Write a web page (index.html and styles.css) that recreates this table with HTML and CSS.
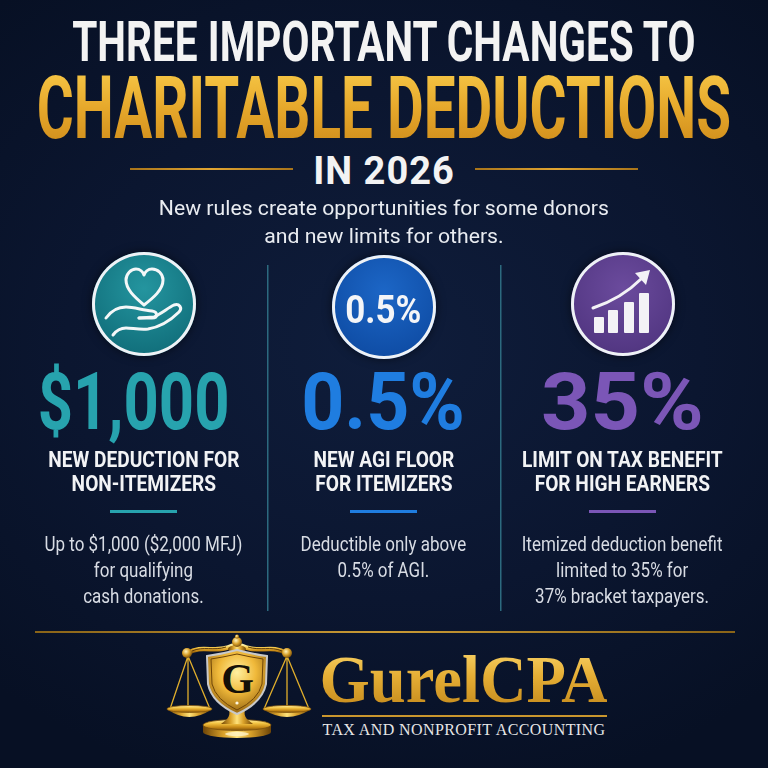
FILE: index.html
```html
<!DOCTYPE html>
<html lang="en">
<head>
<meta charset="utf-8">
<title>Three Important Changes to Charitable Deductions in 2026</title>
<link rel="stylesheet" href="styles.css">
</head>
<body>
<div class="page">
  <header class="hero">
    <h1 class="t1"><span class="sx sx-t1">THREE IMPORTANT CHANGES TO</span></h1>
    <h2 class="t2"><span class="sx sx-t2">CHARITABLE DEDUCTIONS</span></h2>
    <div class="year-row"><span class="rule"></span><span class="year">IN 2026</span><span class="rule"></span></div>
    <p class="sub"><span class="sx sx-sub">New rules create opportunities for some donors<br>and new limits for others.</span></p>
  </header>

  <section class="cols">
    <article class="col">
      <div class="icon icon-teal">
        <svg width="104" height="104" viewBox="0 0 104 104" fill="none" stroke="#f4f7f8" stroke-width="3" stroke-linecap="round" stroke-linejoin="round">
          <path d="M52 53 C44 46 34 38 34 28 C34 22 39 17 44 17 C48 17 51 20 52 23 C53 20 56 17 60 17 C66 17 71 22 71 28 C71 38 61 46 52 53 Z"/>
          <path d="M14 66 C19 59 26 55 34 55 C42 55 50 58 60 59 C66 60 66 66 60 66 L47 66"/>
          <path d="M47 66 L62 65 C70 61 76 56 82 53 C87 51 91 56 87 60 C79 68 68 75 56 77 C48 78 40 76 34 76 C28 76 24 79 21 83"/>
        </svg>
      </div>
      <div class="num num-teal">$1,000</div>
      <div class="label">NEW DEDUCTION FOR<br>NON-ITEMIZERS</div>
      <div class="bar bar-teal"></div>
      <p class="desc">Up to $1,000 ($2,000 MFJ)<br>for qualifying<br>cash donations.</p>
    </article>

    <article class="col col-div">
      <div class="icon icon-blue icon-mid"><span class="icon-text">0.5%</span></div>
      <div class="num num-blue">0.5%</div>
      <div class="label">NEW AGI FLOOR<br>FOR ITEMIZERS</div>
      <div class="bar bar-blue"></div>
      <p class="desc">Deductible only above<br>0.5% of AGI.</p>
    </article>

    <article class="col col-div">
      <div class="icon icon-purple">
        <svg width="104" height="104" viewBox="0 0 104 104">
          <g fill="#f3f2f6">
            <rect x="23" y="65" width="10" height="16" rx="1"/>
            <rect x="37" y="58" width="10" height="23" rx="1"/>
            <rect x="53" y="50" width="10" height="31" rx="1"/>
            <rect x="68" y="41" width="10" height="40" rx="1"/>
            <polygon points="79,18 64,21 75,33"/>
          </g>
          <path d="M22 56 C40 50 56 41 70 27" fill="none" stroke="#f3f2f6" stroke-width="3" stroke-linecap="round"/>
        </svg>
      </div>
      <div class="num num-purple">35%</div>
      <div class="label">LIMIT ON TAX BENEFIT<br>FOR HIGH EARNERS</div>
      <div class="bar bar-purple"></div>
      <p class="desc">Itemized deduction benefit<br>limited to 35% for<br>37% bracket taxpayers.</p>
    </article>
  </section>

  <footer class="foot">
    <div class="foot-rule"></div>
    <div class="brand">
      <svg class="brand-mark" width="150" height="106" viewBox="162 634 150 106">
        <defs>
          <linearGradient id="gv" x1="0" y1="0" x2="0" y2="1">
            <stop offset="0" stop-color="#fff1a6"/>
            <stop offset="0.35" stop-color="#f4c443"/>
            <stop offset="0.7" stop-color="#c88a17"/>
            <stop offset="1" stop-color="#7d520b"/>
          </linearGradient>
          <linearGradient id="gh" x1="0" y1="0" x2="1" y2="0">
            <stop offset="0" stop-color="#6e4507"/>
            <stop offset="0.3" stop-color="#d9a12a"/>
            <stop offset="0.5" stop-color="#ffe27a"/>
            <stop offset="0.7" stop-color="#d9a12a"/>
            <stop offset="1" stop-color="#6e4507"/>
          </linearGradient>
          <radialGradient id="gball" cx="0.4" cy="0.35" r="0.7">
            <stop offset="0" stop-color="#fff4c0"/>
            <stop offset="0.5" stop-color="#d9a12a"/>
            <stop offset="1" stop-color="#6e4507"/>
          </radialGradient>
          <radialGradient id="gshield" cx="0.5" cy="0.35" r="0.7">
            <stop offset="0" stop-color="#fff0a0"/>
            <stop offset="0.45" stop-color="#f0b93a"/>
            <stop offset="1" stop-color="#8a5a0c"/>
          </radialGradient>
        </defs>
        <g stroke="#e0ae2c" stroke-width="1.3" fill="none">
          <path d="M188 656 L170 709 M188 656 L188 709 M188 656 L210 709"/>
          <path d="M287 656 L264 709 M287 656 L287 709 M287 656 L309 709"/>
        </g>
        <path d="M167 709 Q189 725 212 709 Z" fill="url(#gh)"/>
        <ellipse cx="189.5" cy="709" rx="22.5" ry="3.5" fill="url(#gv)" stroke="#8a5a0c" stroke-width="0.8"/>
        <path d="M263 709 Q287 725 311 709 Z" fill="url(#gh)"/>
        <ellipse cx="287" cy="709" rx="24" ry="3.5" fill="url(#gv)" stroke="#8a5a0c" stroke-width="0.8"/>
        <path d="M203 725 L203 732 A34 6 0 0 0 271 732 L271 725 Z" fill="url(#gh)"/>
        <ellipse cx="237" cy="725" rx="34" ry="5.5" fill="url(#gv)" stroke="#7d520b" stroke-width="0.8"/>
        <ellipse cx="237" cy="734" rx="12" ry="2.2" fill="#fff4c8" opacity="0.8"/>
        <path d="M229 710 C231 717 226 720 221 724 L253 724 C248 720 243 717 245 710 Z" fill="url(#gh)"/>
        <path d="M188 653 C200 645 214 652 226 648 C232 646 234 645 237 645 C240 645 242 646 248 648 C260 652 274 645 286 653" fill="none" stroke="url(#gv)" stroke-width="4.5" stroke-linecap="round"/>
        <path d="M192 651 C203 646 214 651 226 647" fill="none" stroke="#5a3a08" stroke-width="1"/>
        <path d="M282 651 C271 646 260 651 248 647" fill="none" stroke="#5a3a08" stroke-width="1"/>
        <circle cx="187" cy="653" r="5" fill="url(#gball)"/>
        <circle cx="287" cy="653" r="5" fill="url(#gball)"/>
        <ellipse cx="237" cy="649" rx="9" ry="4" fill="url(#gh)"/>
        <circle cx="237" cy="642" r="5" fill="url(#gball)"/>
        <circle cx="237" cy="636.5" r="2" fill="url(#gball)"/>
        <path d="M207 656 Q222 654 237 650 Q252 654 267 656 L266 684 Q262 703 237 714 Q212 703 208 684 Z" fill="url(#gshield)" stroke="#c9c9c9" stroke-width="2"/>
        <path d="M211 659 Q224 657 237 654 Q250 657 263 659 L262 684 Q258 700 237 710 Q216 700 212 684 Z" fill="none" stroke="#6e4507" stroke-width="1"/>
        <text x="237.5" y="693" text-anchor="middle" font-family="Liberation Serif, serif" font-weight="700" font-size="42" fill="#141008">G</text>
        <circle cx="237" cy="703" r="1.6" fill="#fff8e0"/>
      </svg>
      <div class="brand-text">
        <div class="brand-name"><span class="sx brand-name-in">GurelCPA</span></div>
        <div class="brand-line"></div>
        <div class="brand-tag">TAX AND NONPROFIT ACCOUNTING</div>
      </div>
    </div>
  </footer>
</div>
</body>
</html>
```

FILE: styles.css
```css
* { box-sizing: border-box; }

html, body {
  margin: 0;
  padding: 0;
}

body {
  width: 768px;
  height: 768px;
  overflow: hidden;
  background: radial-gradient(ellipse 75% 60% at 50% 45%, #0f1d3b 0%, #0b1630 55%, #071024 100%);
  font-family: Roboto, "Liberation Sans", Arial, sans-serif;
  color: #fff;
}

.page {
  width: 768px;
  height: 768px;
}

.sx {
  display: inline-block;
  white-space: nowrap;
  transform-origin: center;
}

/* ---------- header ---------- */
.hero {
  padding-top: 16px;
}

.t1 {
  margin: 0;
  height: 52px;
  line-height: 52px;
  font-size: 56px;
  font-weight: 700;
  display: flex;
  justify-content: center;
}

.sx-t1 {
  transform: scaleX(0.725);
  color: #f3f3f3;
}

.t2 {
  margin: 0;
  height: 80px;
  line-height: 80px;
  font-size: 87px;
  font-weight: 700;
  display: flex;
  justify-content: center;
}

.sx-t2 {
  transform: scaleX(0.65);
  background: linear-gradient(180deg, #f7c847 0%, #e6a82b 50%, #cf8c1b 100%);
  -webkit-background-clip: text;
  background-clip: text;
  color: transparent;
}

.year-row {
  margin-top: 3px;
  height: 40px;
  display: flex;
  align-items: center;
  justify-content: center;
  gap: 20px;
}

.rule {
  width: 163px;
  height: 2px;
  margin-bottom: 4px;
  background: linear-gradient(90deg, #a8741a, #e1a532 50%, #a8741a);
}

.year {
  font-size: 38px;
  font-weight: 700;
  line-height: 40px;
  letter-spacing: 1px;
  color: #f3f3f3;
}

.sub {
  margin: 3px 0 0;
  font-size: 21px;
  line-height: 28px;
  color: #e9ecf1;
  display: flex;
  justify-content: center;
}

.sx-sub {
  text-align: center;
  transform: scaleX(1.01);
}

/* ---------- columns ---------- */
.cols {
  margin-top: 2px;
  padding-left: 20px;
  display: grid;
  grid-template-columns: 247px 233px 245px;
}

.col {
  display: flex;
  flex-direction: column;
  align-items: center;
  padding-bottom: 2px;
}

.col-div {
  background: linear-gradient(#2c6a7f, #2c6a7f) 0 13px / 1.5px calc(100% - 13px) no-repeat;
}

.icon {
  width: 104px;
  height: 104px;
  border-radius: 50%;
  box-shadow: inset 0 0 0 3px #eef2f6, 0 0 10px rgba(0, 0, 0, 0.55);
  display: flex;
  align-items: center;
  justify-content: center;
}

.icon svg { display: block; }

.icon-teal {
  background: radial-gradient(circle at 50% 35%, #24959f 0%, #13737f 70%, #0e6370 100%);
}

.icon-blue {
  background: radial-gradient(circle at 50% 35%, #1c66c6 0%, #104fa8 70%, #0c4292 100%);
}

.icon-purple {
  background: radial-gradient(circle at 50% 35%, #6b4b9d 0%, #543884 70%, #46306f 100%);
}

.icon-mid {
  margin-top: 3px;
  margin-bottom: -3px;
}

.icon-text {
  padding-top: 6px;
  font-size: 38px;
  font-weight: 700;
  color: #f4f5f7;
  transform: scaleX(0.92);
}

.num {
  margin-top: 6px;
  height: 80px;
  font-size: 80px;
  font-weight: 700;
  line-height: 80px;
  white-space: nowrap;
}

.num-teal {
  color: #27a3ae;
  transform: translateX(-10px) scaleX(0.77);
}

.num-blue {
  color: #1f7de0;
  transform: scaleX(0.94);
}

.num-purple {
  color: #7b56b7;
  transform: scaleX(1.08);
}

.label {
  margin-top: 6px;
  font-size: 22px;
  font-weight: 700;
  line-height: 24px;
  text-align: center;
  white-space: nowrap;
  color: #f2f3f5;
  transform: scaleX(0.87);
}

.bar {
  margin-top: 14px;
  width: 67px;
  height: 3px;
}

.bar-teal { background: #27a3ae; }
.bar-blue { background: #1f7de0; }
.bar-purple { background: #7b56b7; }

.desc {
  margin: 18px 0 0;
  font-size: 20px;
  line-height: 26px;
  height: 78px;
  text-align: center;
  white-space: nowrap;
  color: #d8dce4;
  transform: scaleX(0.85);
}

/* ---------- footer ---------- */
.foot-rule {
  margin: 20px 33px 0 35px;
  height: 2px;
  background: linear-gradient(90deg, #8a6418, #c99a35 50%, #8a6418);
}

.brand {
  margin-top: 1px;
  display: flex;
  justify-content: center;
  gap: 10px;
}

.brand-mark { display: block; }

.brand-text {
  width: 285px;
  padding-top: 15px;
  display: flex;
  flex-direction: column;
}

.brand-name {
  height: 60px;
  font-family: "Liberation Serif", "Times New Roman", serif;
  font-size: 68px;
  font-weight: 700;
  line-height: 60px;
  display: flex;
  justify-content: center;
}

.brand-name-in {
  transform: scaleX(0.95);
  background: linear-gradient(180deg, #f8d266 0%, #e5ae35 45%, #c58a1c 100%);
  -webkit-background-clip: text;
  background-clip: text;
  color: transparent;
}

.brand-line {
  margin-top: 6px;
  height: 1.5px;
  background: #c9962e;
}

.brand-tag {
  margin-top: 4px;
  font-family: "Liberation Serif", "Times New Roman", serif;
  font-size: 16px;
  line-height: 18px;
  letter-spacing: 0.4px;
  white-space: nowrap;
  text-align: center;
  color: #e6e6e6;
}
```
